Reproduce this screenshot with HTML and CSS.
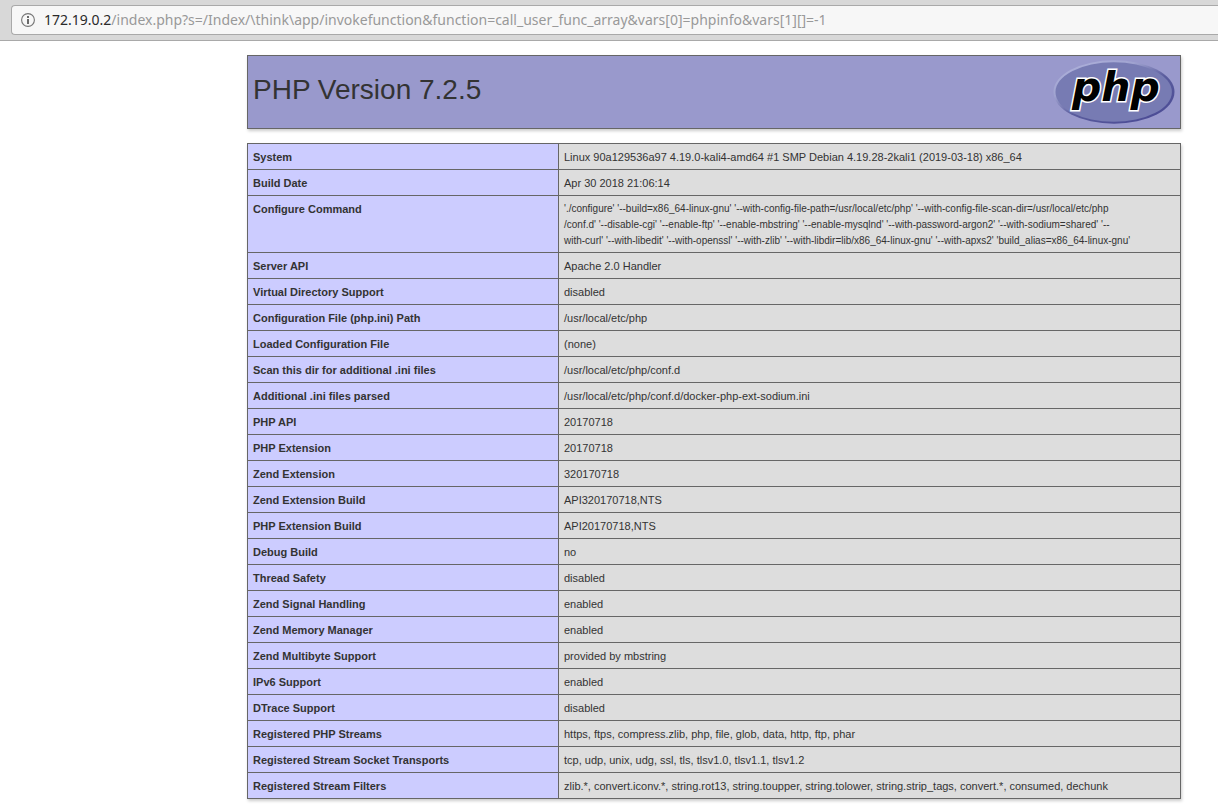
FILE: index.html
```html
<!DOCTYPE html>
<html lang="en">
<head>
  <meta charset="UTF-8">
  <meta name="viewport" content="width=device-width, initial-scale=1.0">
  <title>phpinfo()</title>
  <link rel="stylesheet" href="styles.css">
</head>
<body>
  <header class="toolbar">
    <div class="urlbar">
      <button class="info-btn" type="button" aria-label="Site information">
        <svg width="14" height="14" viewBox="0 0 14 14">
          <circle cx="7" cy="7" r="6.4" fill="none" stroke="#757575" stroke-width="1.1"/>
          <rect x="6" y="3" width="2" height="2" fill="#6a6a6a"/>
          <rect x="6" y="6" width="2" height="5" fill="#6a6a6a"/>
        </svg>
      </button>
      <div class="url" role="textbox" aria-label="Address"><span class="host">172.19.0.2</span>/index.php?s=/Index/\think\app/invokefunction&amp;function=call_user_func_array&amp;vars[0]=phpinfo&amp;vars[1][]=-1</div>
    </div>
  </header>

  <main class="center">
    <div class="head">
      <h1>PHP Version 7.2.5</h1>
      <a class="logo" href="http://www.php.net/">
        <svg width="122" height="64" viewBox="0 0 122 64" role="img" aria-label="PHP logo">
          <defs>
            <linearGradient id="rim" x1="0.1" y1="0" x2="0.9" y2="1">
              <stop offset="0" stop-color="#b0b3dc"/>
              <stop offset="0.3" stop-color="#a0a3d0"/>
              <stop offset="0.55" stop-color="#5a5c9d"/>
              <stop offset="1" stop-color="#484893"/>
            </linearGradient>
          </defs>
          <ellipse cx="61" cy="32" rx="60.5" ry="31.7" fill="url(#rim)"/>
          <ellipse cx="60.7" cy="32" rx="58.2" ry="29.8" fill="#777bb3"/>
          <text class="logo-text logo-outline" x="19" y="41">php</text>
          <text class="logo-text" x="19" y="41">php</text>
        </svg>
      </a>
    </div>

    <table>
      <tr><th class="e" scope="row">System</th><td class="v">Linux 90a129536a97 4.19.0-kali4-amd64 #1 SMP Debian 4.19.28-2kali1 (2019-03-18) x86_64</td></tr>
      <tr><th class="e" scope="row">Build Date</th><td class="v">Apr 30 2018 21:06:14</td></tr>
      <tr><th class="e" scope="row">Configure Command</th><td class="v command">'./configure' '--build=x86_64-linux-gnu' '--with-config-file-path=/usr/local/etc/php' '--with-config-file-scan-dir=/usr/local/etc/php<br>/conf.d' '--disable-cgi' '--enable-ftp' '--enable-mbstring' '--enable-mysqlnd' '--with-password-argon2' '--with-sodium=shared' '--<br>with-curl' '--with-libedit' '--with-openssl' '--with-zlib' '--with-libdir=lib/x86_64-linux-gnu' '--with-apxs2' 'build_alias=x86_64-linux-gnu'</td></tr>
      <tr><th class="e" scope="row">Server API</th><td class="v">Apache 2.0 Handler</td></tr>
      <tr><th class="e" scope="row">Virtual Directory Support</th><td class="v">disabled</td></tr>
      <tr><th class="e" scope="row">Configuration File (php.ini) Path</th><td class="v">/usr/local/etc/php</td></tr>
      <tr><th class="e" scope="row">Loaded Configuration File</th><td class="v">(none)</td></tr>
      <tr><th class="e" scope="row">Scan this dir for additional .ini files</th><td class="v">/usr/local/etc/php/conf.d</td></tr>
      <tr><th class="e" scope="row">Additional .ini files parsed</th><td class="v">/usr/local/etc/php/conf.d/docker-php-ext-sodium.ini</td></tr>
      <tr><th class="e" scope="row">PHP API</th><td class="v">20170718</td></tr>
      <tr><th class="e" scope="row">PHP Extension</th><td class="v">20170718</td></tr>
      <tr><th class="e" scope="row">Zend Extension</th><td class="v">320170718</td></tr>
      <tr><th class="e" scope="row">Zend Extension Build</th><td class="v">API320170718,NTS</td></tr>
      <tr><th class="e" scope="row">PHP Extension Build</th><td class="v">API20170718,NTS</td></tr>
      <tr><th class="e" scope="row">Debug Build</th><td class="v">no</td></tr>
      <tr><th class="e" scope="row">Thread Safety</th><td class="v">disabled</td></tr>
      <tr><th class="e" scope="row">Zend Signal Handling</th><td class="v">enabled</td></tr>
      <tr><th class="e" scope="row">Zend Memory Manager</th><td class="v">enabled</td></tr>
      <tr><th class="e" scope="row">Zend Multibyte Support</th><td class="v">provided by mbstring</td></tr>
      <tr><th class="e" scope="row">IPv6 Support</th><td class="v">enabled</td></tr>
      <tr><th class="e" scope="row">DTrace Support</th><td class="v">disabled</td></tr>
      <tr><th class="e" scope="row">Registered PHP Streams</th><td class="v">https, ftps, compress.zlib, php, file, glob, data, http, ftp, phar</td></tr>
      <tr><th class="e" scope="row">Registered Stream Socket Transports</th><td class="v">tcp, udp, unix, udg, ssl, tls, tlsv1.0, tlsv1.1, tlsv1.2</td></tr>
      <tr><th class="e" scope="row">Registered Stream Filters</th><td class="v">zlib.*, convert.iconv.*, string.rot13, string.toupper, string.tolower, string.strip_tags, convert.*, consumed, dechunk</td></tr>
    </table>
  </main>
</body>
</html>
```
FILE: styles.css
```css
* {
  box-sizing: border-box;
}

body {
  margin: 0;
  background-color: #fff;
  color: #333;
  font-family: "Liberation Sans", Arial, sans-serif;
}

/* Browser address bar */
.toolbar {
  padding: 5px 0 5px 11px;
  background-color: #d8d8d8;
  border-bottom: 1px solid #a9a9a9;
}

.urlbar {
  display: flex;
  align-items: center;
  gap: 9px;
  height: 30px;
  padding-left: 9px;
  background-color: #f7f7f7;
  border: 1px solid #a9a9a9;
  border-right: none;
  border-radius: 4px 0 0 4px;
}

.info-btn {
  display: flex;
  padding: 0;
  border: none;
  background: none;
}

.url {
  color: #999;
  font-family: "Noto Sans", sans-serif;
  font-size: 14px;
  line-height: 28px;
  white-space: nowrap;
}

.host {
  color: #2a2a2a;
}

/* phpinfo output */
.center {
  padding: 14px 37px 9px 247px;
}

.head {
  display: flex;
  justify-content: space-between;
  align-items: flex-start;
  height: 74px;
  margin-bottom: 14px;
  padding: 4px 5px;
  background-color: #99c;
  border: 1px solid #666;
  box-shadow: 1px 2px 3px #ccc;
}

h1 {
  margin: 13px 0 0;
  font-size: 28px;
  font-weight: normal;
  line-height: 34px;
}

.logo svg {
  display: block;
}

.logo-text {
  font-family: "DejaVu Sans", sans-serif;
  font-size: 41px;
  font-weight: bold;
  font-style: italic;
  fill: #000;
}

.logo-outline {
  stroke: #fff;
  stroke-width: 3px;
}

table {
  width: 100%;
  border-collapse: collapse;
  box-shadow: 1px 2px 3px #ccc;
}

.e,
.v {
  border: 1px solid #666;
  font-size: 11px;
  line-height: 16px;
  text-align: left;
  vertical-align: top;
}

.e {
  width: 311px;
  padding: 5px 5px 4px;
  background-color: #ccf;
  font-weight: bold;
}

.v {
  padding: 5px 5px 3px;
  background-color: #ddd;
}

/* keeps the long build flags on three lines */
.command {
  font-size: 10px;
}
```
